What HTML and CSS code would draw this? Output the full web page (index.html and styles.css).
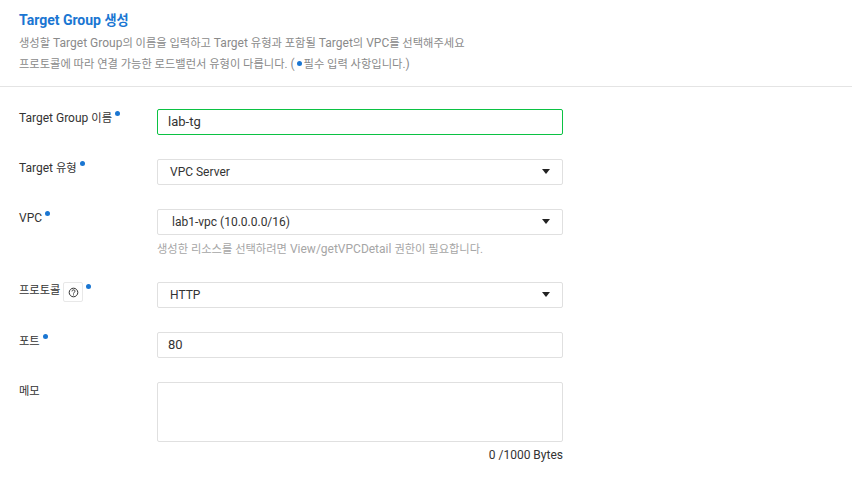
FILE: index.html
```html
<!DOCTYPE html>
<html lang="ko">
  <head>
    <meta charset="UTF-8" />
    <title>Target Group 생성</title>
    <link rel="stylesheet" href="styles.css">
  </head>
  <body>
    <div class="page-head">
      <h3>Target Group <span class="ko">생성</span></h3>
      <p><span class="ko">생성할</span> Target Group<span class="ko">의 이름을 입력하고</span> Target <span class="ko">유형과 포함될</span> Target<span class="ko">의</span> VPC<span class="ko">를 선택해주세요</span></p>
      <p><span class="ko">프로토콜에 따라 연결 가능한 로드밸런서 유형이 다릅니다.</span> (<i class="dot dot-inline"></i><span class="ko">필수 입력 사항입니다.</span>)</p>
    </div>

    <form class="form">
      <div class="row">
        <label>Target Group <span class="ko">이름</span><i class="dot"></i></label>
        <div class="field"><div class="box box-input box-active">lab-tg</div></div>
      </div>

      <div class="row">
        <label>Target <span class="ko">유형</span><i class="dot"></i></label>
        <div class="field">
          <div class="box box-select">VPC Server<span class="caret"></span></div>
        </div>
      </div>

      <div class="row">
        <label>VPC<i class="dot"></i></label>
        <div class="field">
          <div class="box box-select box-vpc">lab1-vpc (10.0.0.0/16)<span class="caret"></span></div>
          <div class="hint"><span class="ko">생성한 리소스를 선택하려면</span> View/getVPCDetail <span class="ko">권한이 필요합니다.</span></div>
        </div>
      </div>

      <div class="row">
        <label class="label-help"><span class="ko">프로토콜</span><span class="help">
          <svg width="11" height="11" viewBox="0 0 11 11" fill="none" stroke="#333" stroke-width="1">
            <circle cx="5.5" cy="5.5" r="4.3" />
            <path d="M4 4.4c0-2 3-2 3-.2 0 1.1-1.5 1.1-1.5 2.4" />
            <path d="M5.5 7.4v1" />
          </svg>
        </span><i class="dot"></i></label>
        <div class="field">
          <div class="box box-select">HTTP<span class="caret"></span></div>
        </div>
      </div>

      <div class="row">
        <label><span class="ko">포트</span><i class="dot"></i></label>
        <div class="field"><div class="box box-input">80</div></div>
      </div>

      <div class="row row-last">
        <label><span class="ko">메모</span></label>
        <div class="field">
          <div class="box box-memo"></div>
          <div class="count">0 /1000 Bytes</div>
        </div>
      </div>
    </form>
  </body>
</html>
```

FILE: styles.css
```css
body {
  margin: 0;
  background-color: #ffffff;
  color: #333;
  font-family: Roboto, "Noto Sans CJK KR", sans-serif;
  font-size: 12px;
  overflow: hidden;
}

/* hangul runs a bit narrower than the latin text around it */
.ko {
  font-size: 0.94em;
}

.page-head {
  height: 87px;
  box-sizing: border-box;
  padding: 11px 19px 0;
  border-bottom: 1px solid #e4e4e4;
}

h3 {
  margin: 0 0 3px;
  font-size: 14px;
  line-height: 18px;
  font-weight: bold;
  color: #1a76d2;
}

.page-head p {
  margin: 0;
  height: 21px;
  line-height: 21px;
  font-size: 12px;
  color: #8a8a8a;
}

/* required marker */
.dot {
  display: inline-block;
  width: 5px;
  height: 5px;
  margin-left: 3px;
  border-radius: 50%;
  background-color: #1a76d2;
  vertical-align: 6px;
}

.dot-inline {
  margin: 0 2px 0 2px;
  vertical-align: 2px;
}

.form {
  padding: 22px 19px 0;
}

.row {
  display: flex;
  margin-bottom: 24px;
}

.row label {
  width: 138px;
  flex: none;
  height: 16px;
  padding-top: 1px;
  line-height: 16px;
  color: #333;
}

.row .label-help {
  display: flex;
  align-items: flex-start;
  padding-top: 0;
}

.label-help .ko {
  margin-top: 1px;
}

.field {
  width: 406px;
}

.box {
  position: relative;
  height: 26px;
  box-sizing: border-box;
  padding: 0 12px;
  border: 1px solid #e0e0e0;
  border-radius: 2px;
  font-size: 12px;
  line-height: 24px;
  color: #333;
  background-color: #fff;
}

.box-input {
  padding: 0 10px;
  font-size: 13px;
}

.box-active {
  border-color: #0bc243;
}

.box-vpc {
  padding-left: 14px;
}

.box-memo {
  height: 60px;
}

.caret {
  position: absolute;
  right: 12px;
  top: 9px;
  width: 0;
  height: 0;
  border-left: 4px solid transparent;
  border-right: 4px solid transparent;
  border-top: 5px solid #222;
}

.hint {
  margin-top: 6px;
  line-height: 16px;
  color: #a6a6a6;
}

.label-help .dot {
  margin-top: 2px;
}

.help {
  display: flex;
  flex: none;
  align-items: center;
  justify-content: center;
  box-sizing: border-box;
  width: 20px;
  height: 20px;
  margin-left: 3px;
  border: 1px solid #e8e8e8;
  border-radius: 2px;
}

.count {
  margin-top: 5px;
  text-align: right;
  line-height: 16px;
  color: #333;
}
```
